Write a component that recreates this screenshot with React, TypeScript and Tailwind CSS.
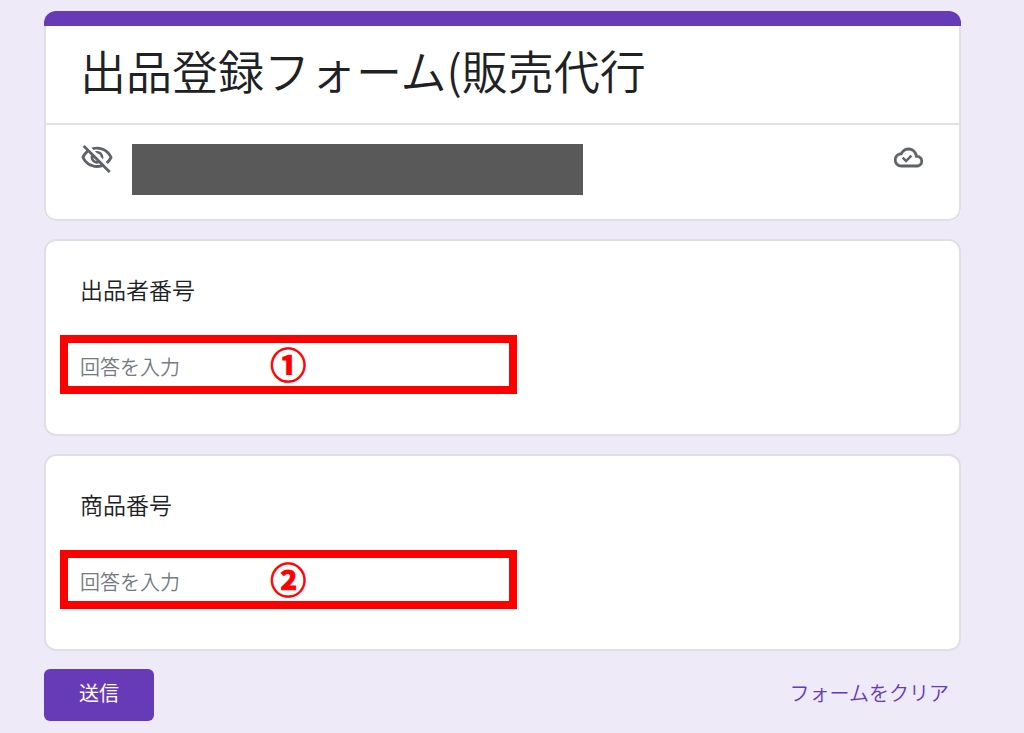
import { useId } from "react";

function VisibilityOffIcon() {
  return (
    <svg
      viewBox="0 0 24 24"
      className="size-[34px] shrink-0 fill-[#5f6368]"
      aria-hidden="true"
    >
      <path d="M10.58,7.25l1.56,1.56c1.38,0.07,2.47,1.17,2.54,2.54l1.56,1.56C16.4,12.47,16.5,12,16.5,11.5C16.5,9.02,14.48,7,12,7C11.5,7,11.03,7.1,10.58,7.25z" />
      <path d="M12,6c3.79,0,7.17,2.13,8.82,5.5c-0.64,1.32-1.56,2.44-2.66,3.33l1.42,1.42c1.51-1.26,2.7-2.89,3.43-4.74C21.27,7.11,17,4,12,4c-1.4,0-2.73,0.25-3.98,0.7L9.63,6.3C10.4,6.12,11.19,6,12,6z" />
      <path d="M16.43,15.93l-1.25-1.25l-1.27-1.27l-3.82-3.82L8.82,8.32L7.57,7.07L6.09,5.59L3.31,2.81L1.89,4.22l2.53,2.53C2.92,8.02,1.73,9.64,1,11.5C2.73,15.89,7,19,12,19c1.4,0,2.73-0.25,3.98-0.7l4.3,4.3l1.41-1.41l-3.78-3.78L16.43,15.93z M11.86,14.19c-1.38-0.07-2.47-1.17-2.54-2.54L11.86,14.19z M12,17c-3.79,0-7.17-2.13-8.82-5.5c0.64-1.32,1.56-2.44,2.66-3.33l1.91,1.91C7.6,10.53,7.5,11,7.5,11.5c0,2.48,2.02,4.5,4.5,4.5c0.5,0,0.97-0.1,1.42-0.25l0.95,0.95C13.6,16.88,12.81,17,12,17z" />
    </svg>
  );
}

function CloudDoneIcon() {
  return (
    <svg
      viewBox="0 0 24 24"
      className="size-[29px] shrink-0 fill-[#5f6368]"
      stroke="#5f6368"
      strokeWidth="0.4"
      aria-hidden="true"
    >
      <path d="M19.35 10.04C18.67 6.59 15.64 4 12 4 9.11 4 6.6 5.64 5.35 8.04 2.34 8.36 0 10.91 0 14c0 3.31 2.69 6 6 6h13c2.76 0 5-2.24 5-5 0-2.64-2.05-4.78-4.65-4.96zM19 18H6c-2.21 0-4-1.79-4-4 0-2.05 1.53-3.76 3.56-3.97l1.07-.11.5-.95C8.08 7.14 9.94 6 12 6c2.62 0 4.88 1.86 5.39 4.43l.3 1.5 1.53.11c1.56.1 2.78 1.41 2.78 2.96 0 1.65-1.35 3-3 3z" />
      <path d="M7.2 12.1l2.8 2.8 4.4-4.4" fill="none" strokeWidth="2" />
    </svg>
  );
}

interface QuestionProps {
  title: string;
  marker: string;
}

function Question({ title, marker }: QuestionProps) {
  const id = useId();

  return (
    <section className="relative rounded-xl border-2 border-[#e0dfe6] bg-white px-[34px] pt-[30px] pb-[49px]">
      <label
        htmlFor={id}
        className="block text-[23px] leading-9 font-[350] text-[#202124]"
      >
        {title}
      </label>
      <input
        id={id}
        type="text"
        placeholder="回答を入力"
        className="mt-[42px] block h-9 w-1/2 text-[20px] leading-9 font-[350] text-[#202124] outline-none placeholder:text-[#757a80]"
      />
      {/* Numbered highlight around the answer field */}
      <div className="pointer-events-none absolute top-[94px] left-[14px] flex h-[59px] w-1/2 items-center justify-center border-8 border-[#ff0000]">
        <span className="pb-1 text-[36px] leading-10 font-bold text-[#ff0000] [-webkit-text-stroke:1px_#ff0000]">
          {marker}
        </span>
      </div>
    </section>
  );
}

export default function App() {
  return (
    <div
      lang="ja"
      className="min-h-screen bg-[#eeeaf8] pt-[11px] pr-[63px] pb-3 pl-11 font-['Noto_Sans_CJK_JP',sans-serif]"
    >
      <form className="flex flex-col gap-[18px]">
        <header className="overflow-hidden rounded-xl bg-white">
          <div className="h-[15px] bg-[#673ab7]" />
          <div className="rounded-b-xl border-2 border-t-0 border-[#e0dfe6]">
            <h1 className="border-b-2 border-[#e0e2e6] px-[34px] pt-2 pb-[19px] text-[46px] leading-[70px] font-[350] text-[#202124]">
              出品登録フォーム(販売代行
            </h1>
            <div className="flex items-start pt-4 pr-9 pb-6 pl-[34px]">
              <VisibilityOffIcon />
              <div className="mt-[3px] ml-[18px] h-[51px] w-[451px] bg-[#595959]" />
              <div className="mt-[2px] ml-auto">
                <CloudDoneIcon />
              </div>
            </div>
          </div>
        </header>

        <Question title="出品者番号" marker="①" />
        <Question title="商品番号" marker="②" />

        <div className="flex items-center justify-between">
          <button
            type="submit"
            className="h-[52px] rounded-md bg-[#673ab7] px-[35px] pb-1 text-[20px] text-white"
          >
            送信
          </button>
          <button
            type="reset"
            className="px-3 pb-1 text-[20px] font-[350] text-[#673ab7]"
          >
            フォームをクリア
          </button>
        </div>
      </form>
    </div>
  );
}
